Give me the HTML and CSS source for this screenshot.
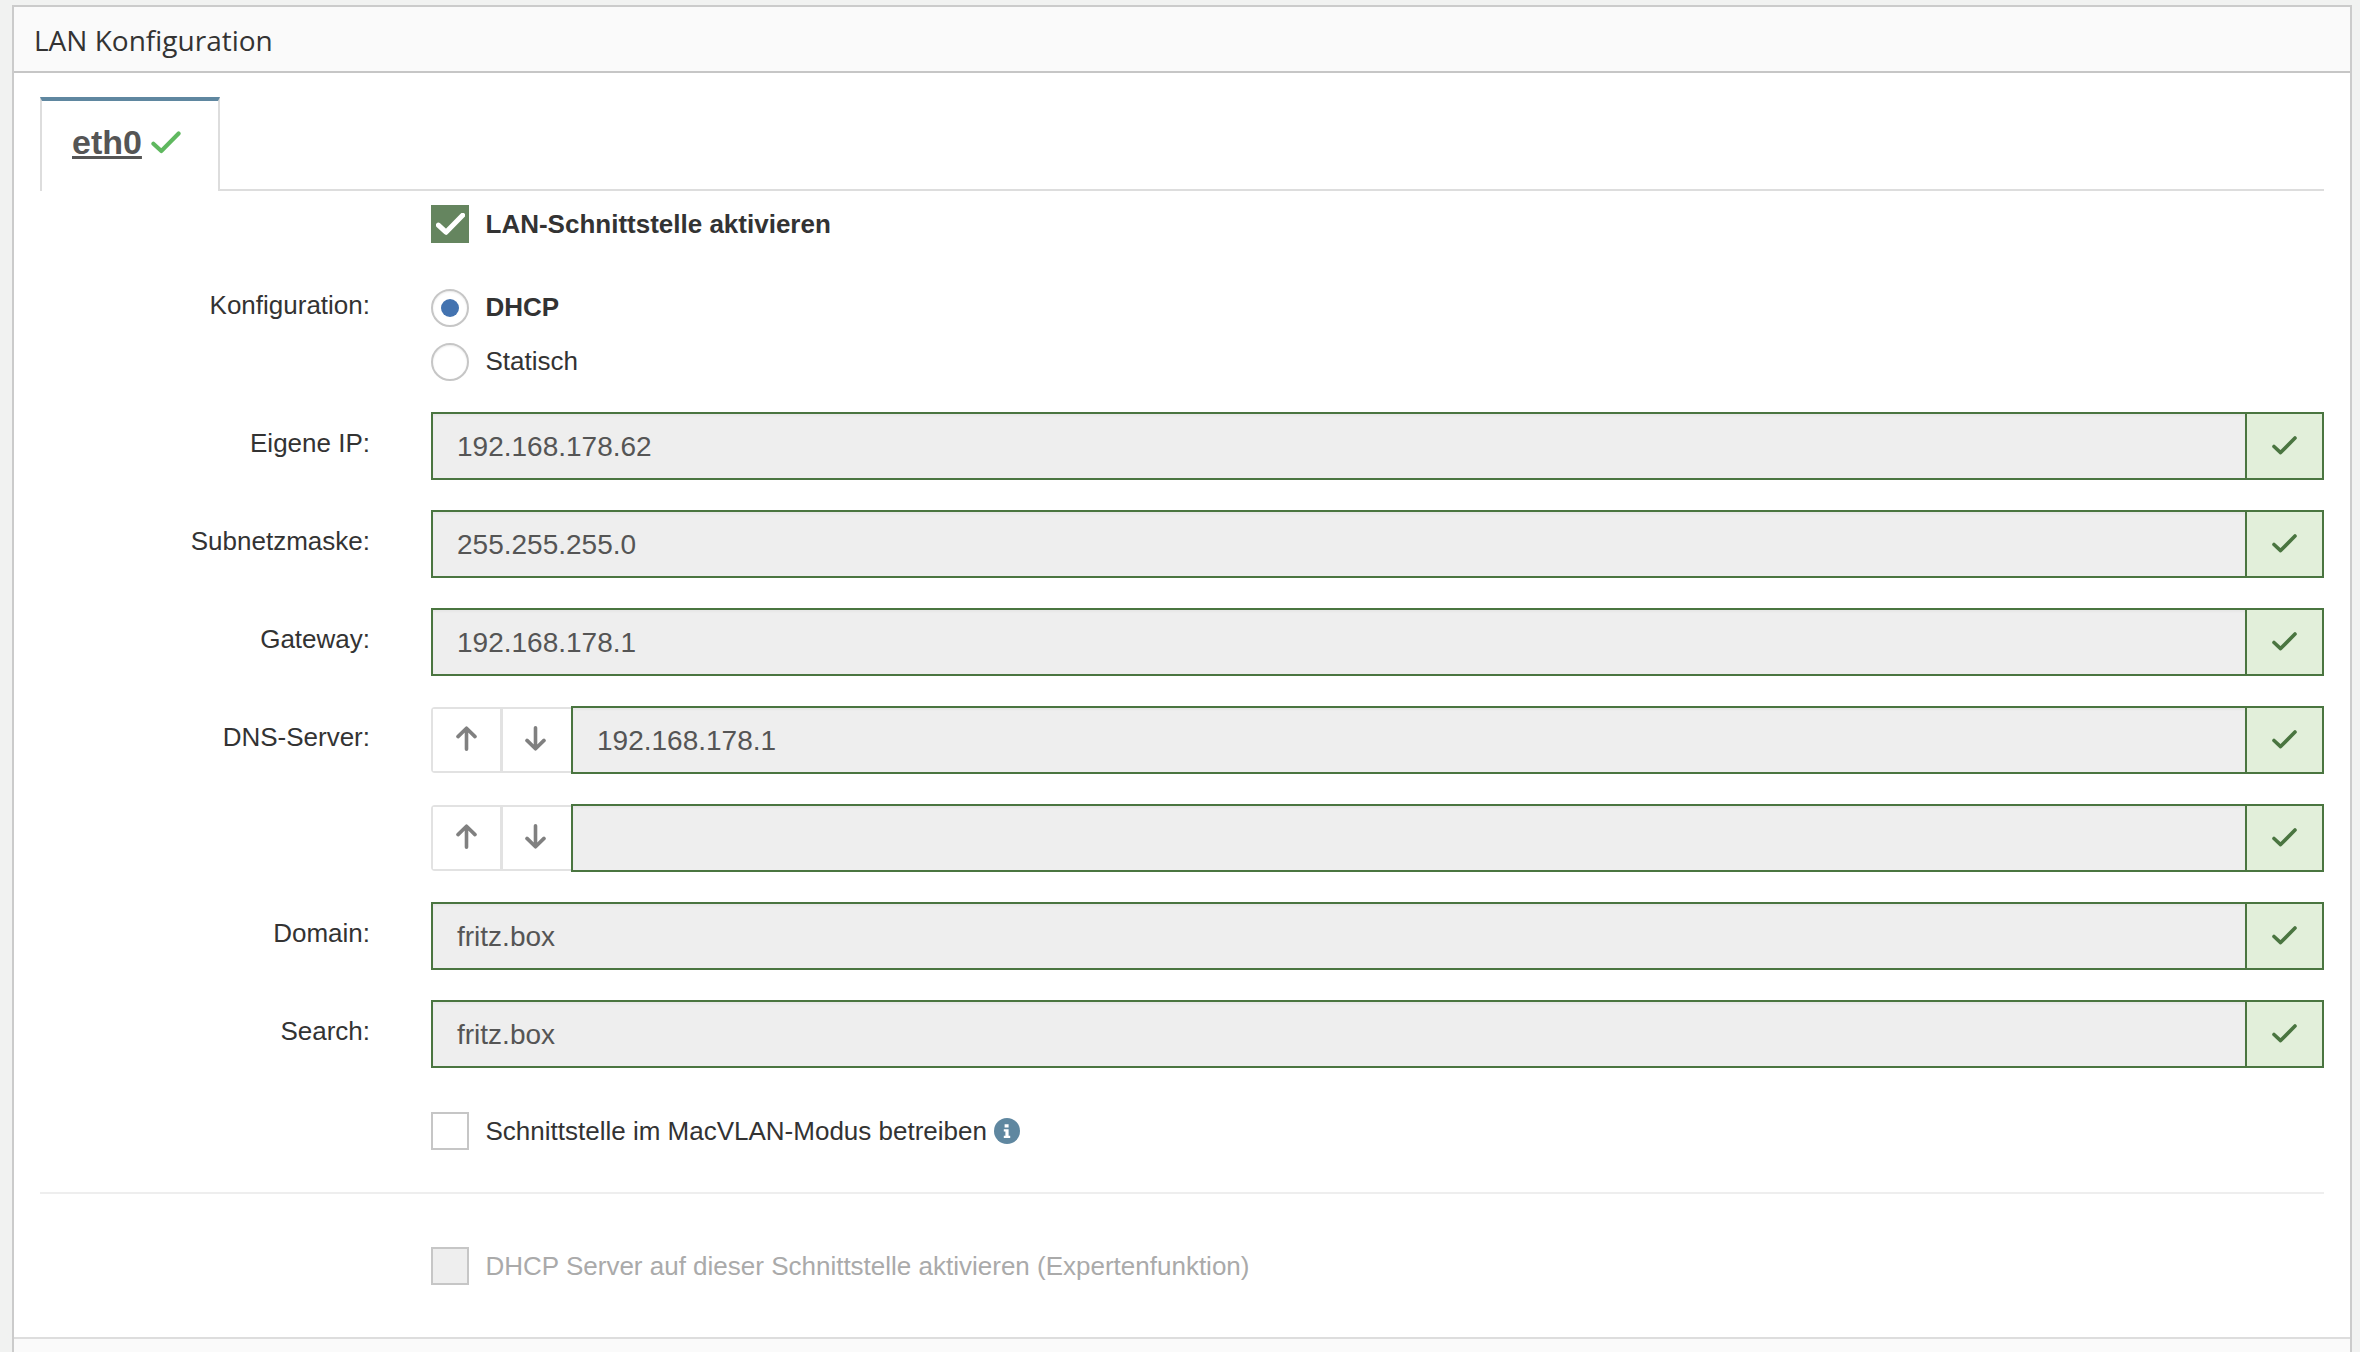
FILE: index.html
```html
<!DOCTYPE html>
<html lang="de">
<head>
<meta charset="utf-8">
<title>LAN Konfiguration</title>
<link rel="stylesheet" href="styles.css">
</head>
<body>
<svg class="sprite" width="0" height="0" aria-hidden="true">
  <symbol id="check" viewBox="0 0 25 19"><path d="M2 10.5 L8.6 16.6 L23 2" fill="none" stroke="currentColor" stroke-linecap="round" stroke-linejoin="round"/></symbol>
  <symbol id="up" viewBox="0 0 21 25"><path d="M10.5 23.2 V2.4 M2 10.6 L10.5 2.2 L19 10.6" fill="none" stroke="currentColor" stroke-width="3.6" stroke-linecap="round" stroke-linejoin="round"/></symbol>
  <symbol id="down" viewBox="0 0 21 25"><path d="M10.5 1.8 V22.6 M2 14.4 L10.5 22.8 L19 14.4" fill="none" stroke="currentColor" stroke-width="3.6" stroke-linecap="round" stroke-linejoin="round"/></symbol>
</svg>
<section class="panel">
  <header class="panel-head">LAN Konfiguration</header>
  <div class="panel-body">
    <nav class="tabs">
      <div class="tab"><span class="tab-name">eth0</span><svg class="tab-check"><use href="#check"/></svg></div>
    </nav>

    <div class="row row-enable">
      <div class="label"></div>
      <div class="check-line">
        <span class="box box-on"><svg class="box-check"><use href="#check"/></svg></span>
        <span class="opt opt-bold">LAN-Schnittstelle aktivieren</span>
      </div>
    </div>

    <div class="row row-radio">
      <div class="label label-radio">Konfiguration:</div>
      <div class="radios">
        <div class="check-line"><span class="radio radio-on"></span><span class="opt opt-bold">DHCP</span></div>
        <div class="check-line"><span class="radio"></span><span class="opt">Statisch</span></div>
      </div>
    </div>

    <div class="row row-field">
      <div class="label">Eigene IP:</div>
      <div class="group">
        <div class="field">192.168.178.62</div>
        <div class="ok"><svg class="ok-check"><use href="#check"/></svg></div>
      </div>
    </div>
    <div class="row row-field">
      <div class="label">Subnetzmaske:</div>
      <div class="group">
        <div class="field">255.255.255.0</div>
        <div class="ok"><svg class="ok-check"><use href="#check"/></svg></div>
      </div>
    </div>
    <div class="row row-field">
      <div class="label">Gateway:</div>
      <div class="group">
        <div class="field">192.168.178.1</div>
        <div class="ok"><svg class="ok-check"><use href="#check"/></svg></div>
      </div>
    </div>
    <div class="row row-field">
      <div class="label">DNS-Server:</div>
      <div class="group">
        <div class="movers">
          <button class="mover" type="button"><svg class="arrow"><use href="#up"/></svg></button>
          <button class="mover" type="button"><svg class="arrow"><use href="#down"/></svg></button>
        </div>
        <div class="field">192.168.178.1</div>
        <div class="ok"><svg class="ok-check"><use href="#check"/></svg></div>
      </div>
    </div>
    <div class="row row-field">
      <div class="label"></div>
      <div class="group">
        <div class="movers">
          <button class="mover" type="button"><svg class="arrow"><use href="#up"/></svg></button>
          <button class="mover" type="button"><svg class="arrow"><use href="#down"/></svg></button>
        </div>
        <div class="field"></div>
        <div class="ok"><svg class="ok-check"><use href="#check"/></svg></div>
      </div>
    </div>
    <div class="row row-field">
      <div class="label">Domain:</div>
      <div class="group">
        <div class="field">fritz.box</div>
        <div class="ok"><svg class="ok-check"><use href="#check"/></svg></div>
      </div>
    </div>
    <div class="row row-field">
      <div class="label">Search:</div>
      <div class="group">
        <div class="field">fritz.box</div>
        <div class="ok"><svg class="ok-check"><use href="#check"/></svg></div>
      </div>
    </div>

    <div class="row row-macvlan">
      <div class="label"></div>
      <div class="check-line">
        <span class="box"></span>
        <span class="opt">Schnittstelle im MacVLAN-Modus betreiben</span>
        <svg class="info" viewBox="0 0 26 26"><circle cx="13" cy="13" r="13" fill="#5f87a0"/><path d="M10.6 6.2 h4 v3.2 h-4 z M9.8 11.2 h4.8 v6.6 h1.6 v2.2 h-6.4 v-2.2 h1.6 v-4.4 h-1.6 z" fill="#fff"/></svg>
      </div>
    </div>

    <hr class="divider">

    <div class="row row-disabled">
      <div class="label"></div>
      <div class="check-line">
        <span class="box box-off"></span>
        <span class="opt opt-off">DHCP Server auf dieser Schnittstelle aktivieren (Expertenfunktion)</span>
      </div>
    </div>
  </div>
  <footer class="panel-foot"></footer>
</section>
</body>
</html>
```
FILE: styles.css
```css
* { box-sizing: border-box; }
html, body { height: 100%; }
body {
  margin: 0;
  padding: 5px 8px 0 12px;
  background: #f1f2f1;
  overflow: hidden;
  font-family: "Liberation Sans", Arial, sans-serif;
  color: #333;
}
.sprite { position: absolute; }
.panel {
  border: 2px solid #cbcbcb;
  border-bottom: 0;
  background: #fff;
}
.panel-head {
  height: 66px;
  padding-left: 20px;
  background: #fafafa;
  border-bottom: 2px solid #c6c6c6;
  font-family: "Open Sans", sans-serif;
  font-size: 28px;
  line-height: 66px;
  color: #333;
}
.panel-body {
  padding: 24px 26px 0;
}
.tabs {
  display: flex;
  height: 94px;
  border-bottom: 2px solid #ddd;
}
.tab {
  width: 180px;
  height: 94px;
  display: flex;
  align-items: flex-start;
  padding: 21px 0 0 30px;
  background: #fff;
  border: 2px solid #ddd;
  border-top: 4px solid #5f87a0;
  border-bottom: 0;
}
.tab-name {
  font-size: 34px;
  line-height: 40px;
  font-weight: 700;
  color: #555;
  text-decoration: underline;
}
.tab-check {
  width: 30px;
  height: 23px;
  margin: 9px 0 0 9px;
  color: #5fb85f;
  stroke-width: 3.4;
}
.row {
  display: flex;
  align-items: flex-start;
}
.label {
  flex: 0 0 330px;
  margin-right: 61px;
  text-align: right;
  font-size: 26px;
  line-height: 36px;
  color: #333;
}
.row-enable { margin-top: 14px; }
.row-radio { margin-top: 46px; }
.row-field { margin-top: 30px; }
.row-field .label { padding-top: 13px; }
.row-radio + .row-field { margin-top: 31px; }
.row-macvlan { margin-top: 44px; }
.row-disabled { margin-top: 53px; }
.label-radio { margin-top: -2px; }
.radios {
  display: flex;
  flex-direction: column;
  gap: 16px;
}
.radios .opt { margin-bottom: 2px; }
.check-line {
  display: flex;
  align-items: center;
  height: 38px;
}
.opt {
  margin-left: 16.5px;
  font-size: 26px;
  line-height: 36px;
  color: #333;
}
.opt-bold { font-weight: 700; }
.opt-off { color: #aaa; }
.box {
  flex: none;
  width: 38px;
  height: 38px;
  border: 2px solid #c6c6c6;
  background: #fff;
}
.box-on {
  border: 0;
  background: #65855f;
  display: flex;
  align-items: center;
  justify-content: center;
}
.box-check {
  width: 29px;
  height: 22px;
  color: #fff;
  stroke-width: 4.4;
}
.box-off { background: #eee; }
.radio {
  flex: none;
  width: 38px;
  height: 38px;
  border: 2px solid #c6c6c6;
  border-radius: 50%;
  background: #fff;
  box-shadow: inset 0 1px 2px rgba(0, 0, 0, .08);
  display: flex;
  align-items: center;
  justify-content: center;
}
.radio-on::after {
  content: "";
  width: 18px;
  height: 18px;
  border-radius: 50%;
  background: #4373b0;
}
.group {
  flex: 1;
  display: flex;
  height: 68px;
}
.field {
  flex: 1;
  border: 2px solid #4a7540;
  border-right: 0;
  background: #eee;
  box-shadow: inset 0 2px 2px rgba(0, 0, 0, .03);
  padding: 1px 0 0 24px;
  font-size: 28px;
  line-height: 64px;
  color: #555;
}
.ok {
  flex: 0 0 79px;
  border: 2px solid #4a7540;
  background: #e2efda;
  color: #4a7540;
  display: flex;
  align-items: center;
  justify-content: center;
}
.ok-check {
  width: 25px;
  height: 19px;
  margin-bottom: 2px;
  stroke-width: 3.6;
}
.movers {
  flex: 0 0 140px;
  display: flex;
  height: 66px;
  margin-top: 1px;
  border: 2px solid #e2e2e2;
  border-right: 0;
  border-radius: 4px 0 0 4px;
}
.mover {
  flex: 0 0 67px;
  padding: 0 0 4px;
  border: 0;
  background: #fff;
  display: flex;
  align-items: center;
  justify-content: center;
  color: #808080;
}
.mover + .mover {
  flex: 1;
  padding-right: 3px;
  border-left: 3px solid #e2e2e2;
}
.arrow {
  width: 21px;
  height: 25px;
}
.info {
  flex: none;
  width: 26px;
  height: 26px;
  margin-left: 7px;
}
.divider {
  height: 2px;
  margin: 42px 0 0;
  border: 0;
  background: #eee;
}
.panel-foot {
  height: 40px;
  margin-top: 52px;
  background: #fafafa;
  border-top: 2px solid #ddd;
}
```
